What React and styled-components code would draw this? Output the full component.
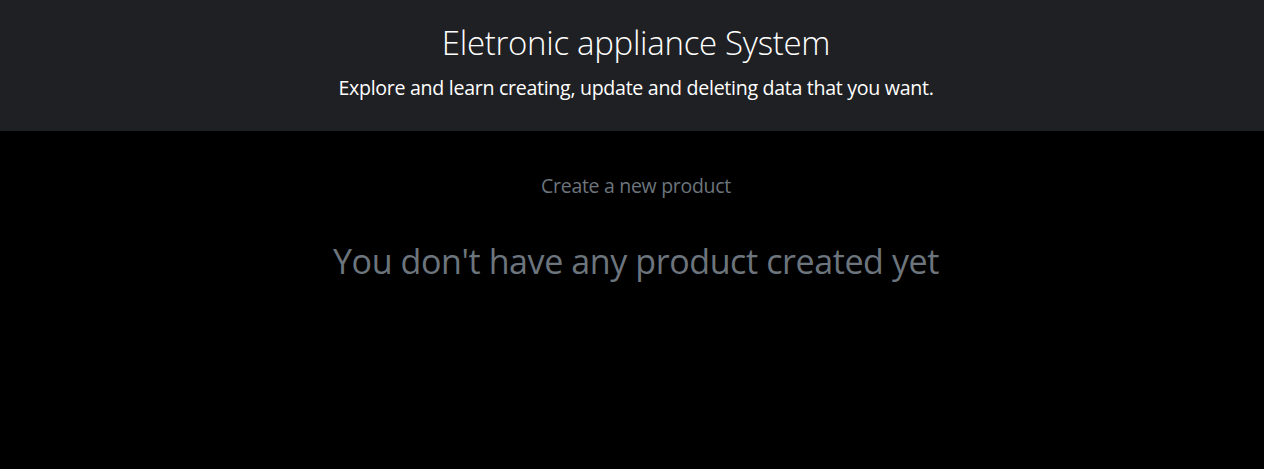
import React from 'react';
import styled, { createGlobalStyle } from 'styled-components';

const GlobalStyle = createGlobalStyle`
  html, body {
    margin: 0;
    padding: 0;
    background: #000000;
    font-family: 'Open Sans', 'Noto Sans', sans-serif;
  }
`;

const Page = styled.div`
  min-height: 100vh;
  background: #000000;
  display: flex;
  flex-direction: column;
`;

const Header = styled.header`
  height: 131px;
  background: #1f2023;
  display: flex;
  flex-direction: column;
  align-items: center;
  padding: 20px 0 0 8px;
  box-sizing: border-box;
`;

const Title = styled.h1`
  margin: 0;
  font-size: 33px;
  font-weight: 300;
  color: #ffffff;
  line-height: 46px;
  letter-spacing: -0.3px;
`;

const Subtitle = styled.p`
  margin: 2px 0 0;
  font-size: 19.6px;
  font-weight: 400;
  color: #ffffff;
  line-height: 40px;
  letter-spacing: -0.3px;
`;

const Main = styled.main`
  display: flex;
  flex-direction: column;
  align-items: center;
  padding: 41px 0 0 8px;
`;

const CreateLink = styled.a`
  font-size: 19.5px;
  color: #6c757d;
  text-decoration: none;
  line-height: 28px;
  cursor: pointer;
  letter-spacing: -0.3px;
`;

const EmptyMessage = styled.h2`
  margin: 38px 0 0;
  font-size: 34px;
  font-weight: 400;
  color: #6c757d;
  line-height: 46px;
  letter-spacing: -0.4px;
`;

const App = () => {
  return (
    <Page>
      <GlobalStyle />
      <Header>
        <Title>Eletronic appliance System</Title>
        <Subtitle>Explore and learn creating, update and deleting data that you want.</Subtitle>
      </Header>
      <Main>
        <CreateLink>Create a new product</CreateLink>
        <EmptyMessage>You don't have any product created yet</EmptyMessage>
      </Main>
    </Page>
  );
};

export default App;
